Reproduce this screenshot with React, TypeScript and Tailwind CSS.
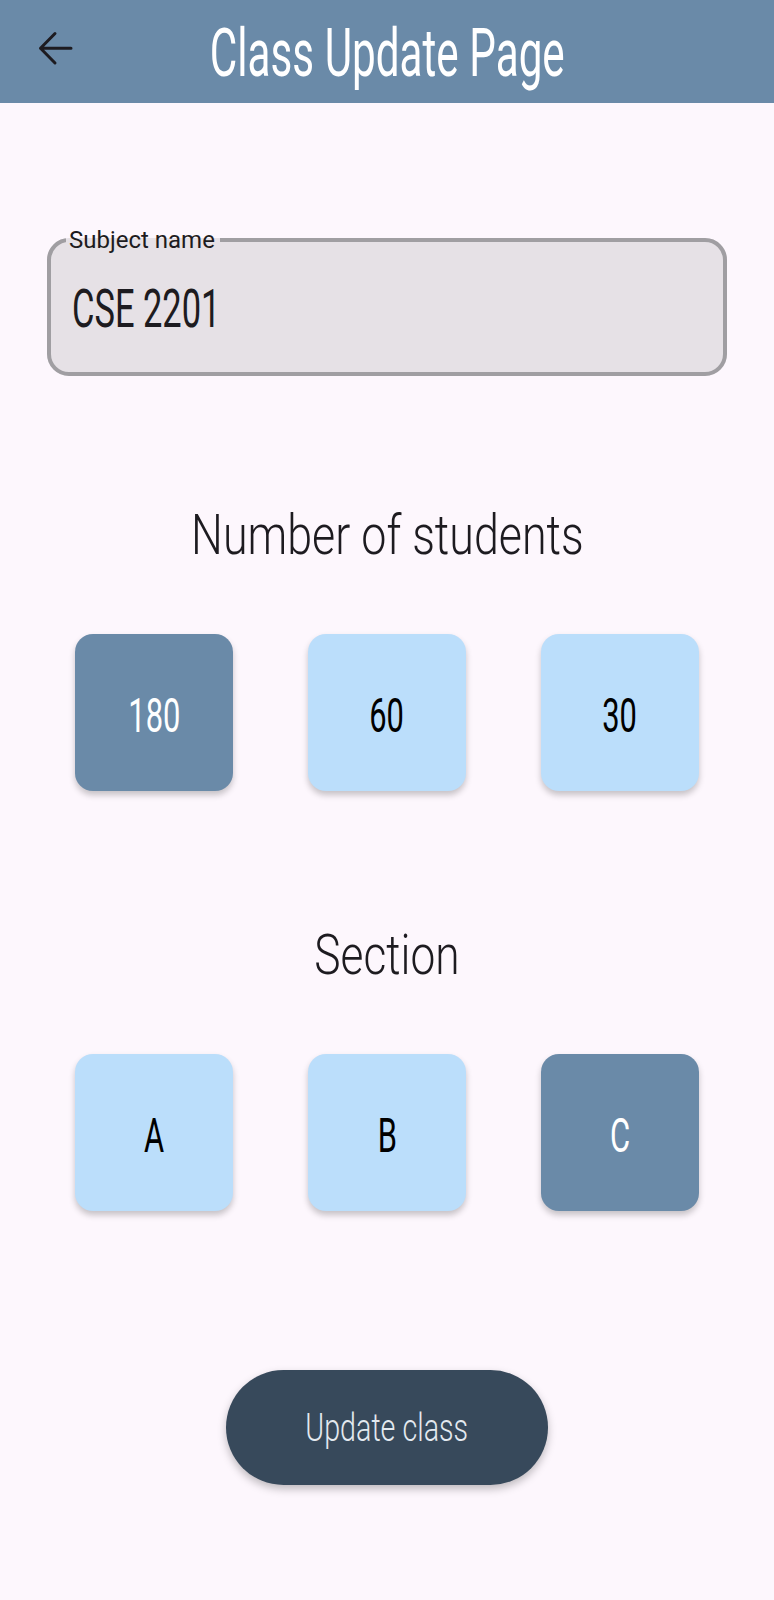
import { useState } from "react";

const roboto = { fontFamily: "Roboto, 'Noto Sans', sans-serif" };

// no condensed face installed, so Roboto is narrowed with scale-x
function Narrow({ text, className }: { text: string; className: string }) {
  return <span className={"inline-block whitespace-nowrap " + className}>{text}</span>;
}

function Choice({ label, active, onClick }: { label: string; active: boolean; onClick: () => void }) {
  return (
    <button
      onClick={onClick}
      className={
        "w-[158px] h-[157px] rounded-[18px] flex items-center justify-center pt-[6px] text-[49px] leading-none shadow-[0_4px_6px_rgba(0,0,0,0.22)] " +
        (active ? "bg-[#6a8aa8] text-white" : "bg-[#bbdefb] text-black")
      }
      style={roboto}
    >
      <Narrow text={label} className="scale-x-[0.63]" />
    </button>
  );
}

export default function App() {
  const [students, setStudents] = useState("180");
  const [section, setSection] = useState("C");

  return (
    <div className="min-h-[1600px] bg-[#fdf7fd] flex flex-col" style={roboto}>
      <header className="h-[103px] bg-[#6a8aa8] grid grid-cols-[1fr_auto_1fr] items-center">
        <div className="pl-[38px] pb-[7px] flex">
          <svg width="36" height="36" viewBox="0 0 36 36" fill="none" stroke="#1d1b20" strokeWidth="3" strokeLinecap="round" strokeLinejoin="round">
            <path d="M2.5 18.3H33M17 3.5L2.5 18.3L17 33" />
          </svg>
        </div>
        <h1 className="text-white text-[66px] leading-none pt-[5px] text-center">
          <Narrow text="Class Update Page" className="scale-x-[0.64]" />
        </h1>
        <div />
      </header>

      <div className="px-[47px] mt-[125px]">
        <fieldset className="h-[148px] border-[4px] border-[#a09ea2] rounded-[22px] bg-[#e6e1e6] px-[15px]">
          <legend className="pl-[3px] pr-[5px] text-[24px] leading-[24px] text-[#1d1b20]">Subject name</legend>
          <div className="pt-[31px] pl-[6px] text-[53px] leading-none text-[#1d1b20]">
            <Narrow text="CSE 2201" className="scale-x-[0.65] origin-left" />
          </div>
        </fieldset>
      </div>

      <h2 className="mt-[119px] h-[80px] flex items-center justify-center text-[56px] leading-none font-light text-[#1d1b20]">
        <Narrow text="Number of students" className="scale-x-[0.8]" />
      </h2>
      <div className="mt-[59px] flex justify-center gap-[75px]">
        {["180", "60", "30"].map((v) => (
          <Choice key={v} label={v} active={students === v} onClick={() => setStudents(v)} />
        ))}
      </div>

      <h2 className="mt-[124px] h-[80px] flex items-center justify-center text-[56px] leading-none font-light text-[#1d1b20]">
        <Narrow text="Section" className="scale-x-[0.79]" />
      </h2>
      <div className="mt-[59px] flex justify-center gap-[75px]">
        {["A", "B", "C"].map((v) => (
          <Choice key={v} label={v} active={section === v} onClick={() => setSection(v)} />
        ))}
      </div>

      <div className="mt-[159px] flex justify-center">
        <button className="w-[322px] h-[115px] rounded-full bg-[#37495b] text-[#e3e9f0] text-[39px] leading-none font-light flex items-center justify-center pt-[2px] shadow-[0_4px_8px_rgba(0,0,0,0.25)]">
          <Narrow text="Update class" className="scale-x-[0.735]" />
        </button>
      </div>
    </div>
  );
}
